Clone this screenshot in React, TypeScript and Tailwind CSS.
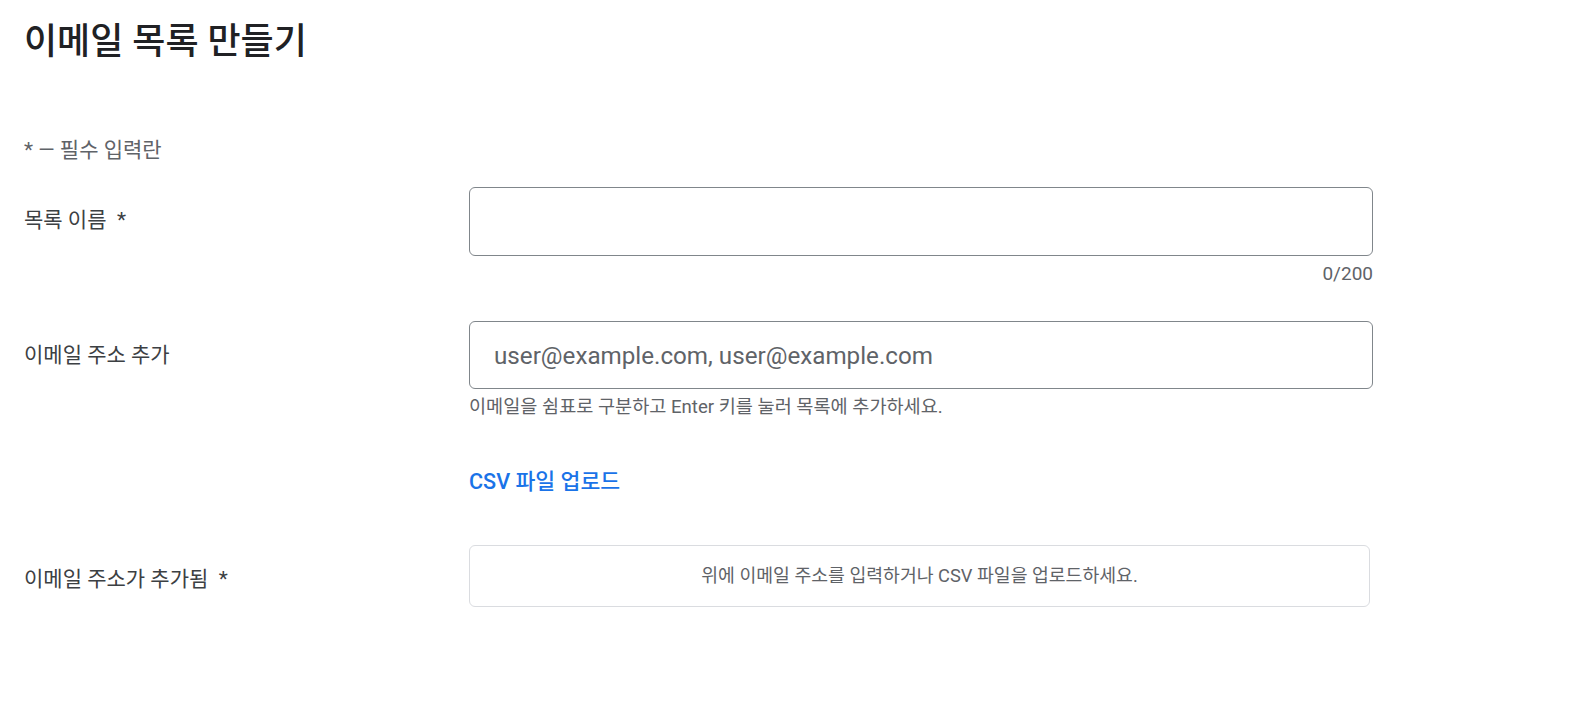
export default function App() {
  const font = { fontFamily: 'Roboto, "Noto Sans CJK KR", sans-serif' };
  return (
    <div style={font} className="min-h-screen bg-white text-[#3c4043] px-6 pt-[18px]">
      <h1 className="text-[36px] leading-[48px] text-[#202124] font-medium">이메일 목록 만들기</h1>
      <div className="mt-[72px] text-[21px] leading-[24px] text-[#5f6368]">* — 필수 입력란</div>
      <div className="mt-[25px] grid grid-cols-[445px_904px] gap-y-0">
        <div className="text-[21px] leading-[24px] pt-[21px]">목록 이름&nbsp; *</div>
        <div>
          <div className="h-[69px] rounded-[6px] border border-[#80868b]"></div>
          <div className="text-right text-[19px] leading-[20px] mt-[8px] text-[#5f6368]">0/200</div>
        </div>

        <div className="text-[21px] leading-[24px] pt-[22px] mt-[37px]">이메일 주소 추가</div>
        <div className="mt-[37px]">
          <div className="h-[68px] rounded-[6px] border border-[#80868b] flex items-center px-6 pt-[3px] text-[24.2px] text-[#5f6368]">user@example.com, user@example.com</div>
          <div className="text-[18.6px] leading-[20px] mt-[8px] text-[#5f6368]">이메일을 쉼표로 구분하고 Enter 키를 눌러 목록에 추가하세요.</div>
          <div className="mt-[53px] text-[21.6px] leading-[24px] font-medium text-[#1a73e8]">CSV 파일 업로드</div>
        </div>

        <div className="text-[21px] leading-[24px] pt-[22px] mt-[51px]">이메일 주소가 추가됨&nbsp; *</div>
        <div className="mt-[51px] w-[901px]">
          <div className="h-[62px] rounded-[6px] border border-[#dadce0] flex items-center justify-center text-[18.3px] text-[#5f6368]">위에 이메일 주소를 입력하거나 CSV 파일을 업로드하세요.</div>
        </div>
      </div>
    </div>
  );
}
